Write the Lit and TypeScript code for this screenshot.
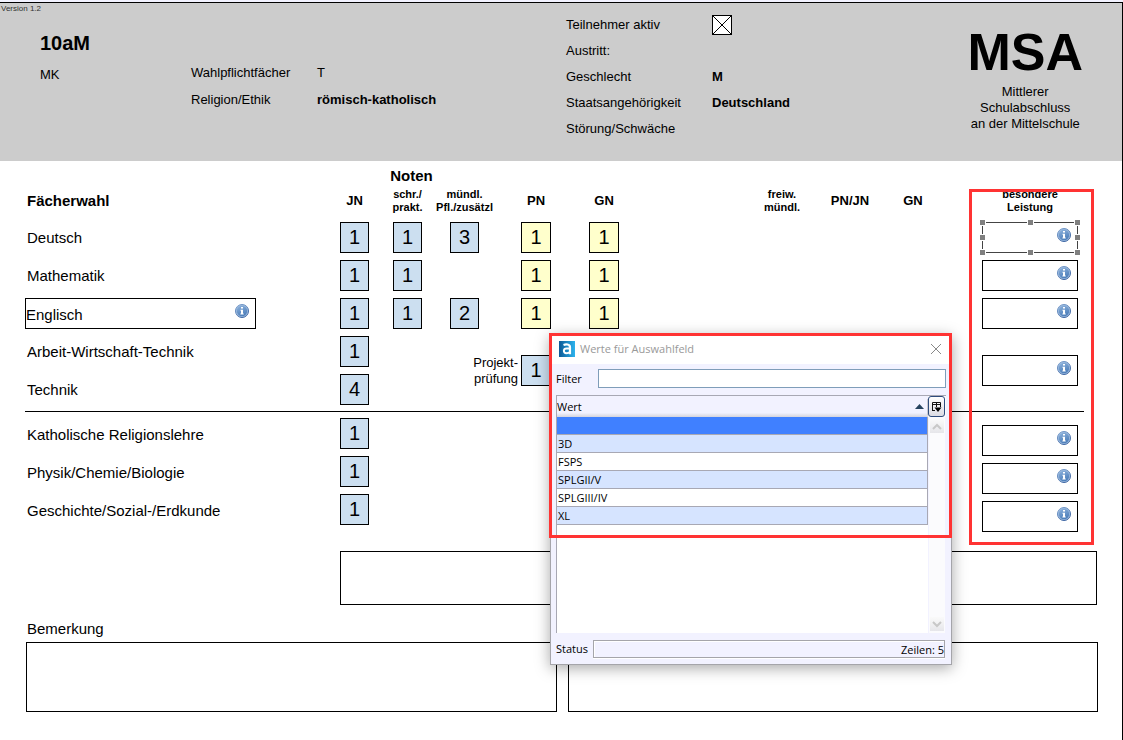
import { LitElement, html, css, nothing } from "lit";
import { customElement, state } from "lit/decorators.js";
import { classMap } from "lit/directives/class-map.js";

interface Subject {
  name: string;
  pick?: boolean;
  grades: string[];
  project?: string;
  extra: "single" | "double" | "none";
}

const MAIN: Subject[] = [
  { name: "Deutsch", grades: ["1", "1", "3", "1", "1"], extra: "single" },
  { name: "Mathematik", grades: ["1", "1", "", "1", "1"], extra: "single" },
  { name: "Englisch", pick: true, grades: ["1", "1", "2", "1", "1"], extra: "single" },
  { name: "Arbeit-Wirtschaft-Technik", grades: ["1"], project: "1", extra: "double" },
  { name: "Technik", grades: ["4"], extra: "none" },
];

const OTHER = ["Katholische Religionslehre", "Physik/Chemie/Biologie", "Geschichte/Sozial-/Erdkunde"];
const COLUMNS = ["JN", "schriftlich/praktisch", "mündlich", "PN", "GN"];

@customElement("info-button")
class InfoButton extends LitElement {
  static styles = css`
    :host { display: block; width: 14px; height: 14px; flex: none; }
    button { display: block; width: 14px; height: 14px; padding: 0; border: 0; background: none; }
    svg { display: block; }
  `;
  render() {
    return html`<button type="button" aria-label="Werte anzeigen">
      <svg width="14" height="14" viewBox="0 0 14 14">
        <defs>
          <linearGradient id="g" x1="0" y1="0" x2="0.4" y2="1">
            <stop offset="0" stop-color="#8db2dc" />
            <stop offset="1" stop-color="#4f80bb" />
          </linearGradient>
          <linearGradient id="rim" x1="0" y1="0" x2="0.6" y2="1">
            <stop offset="0" stop-color="#7fa3d0" />
            <stop offset="1" stop-color="#3a62a0" />
          </linearGradient>
        </defs>
        <circle cx="7" cy="7" r="6.5" fill="#9dbce0" stroke="url(#rim)" />
        <circle cx="7" cy="7" r="5.2" fill="url(#g)" />
        <path d="M6 3h2v1.6H6zM5.5 5.8H8v3.6h.7v1H5.4v-1H6V6.8h-.5z" fill="#fff" />
      </svg>
    </button>`;
  }
}

/** Dialog with the values that can be chosen for a field. */
@customElement("value-dialog")
class ValueDialog extends LitElement {
  @state() private values = ["", "3D", "FSPS", "SPLGII/V", "SPLGIII/IV", "XL"];
  @state() private selected = 0;

  static styles = css`
    :host {
      display: block;
      box-sizing: border-box;
      border: 1px solid #a5a5aa;
      background: #f2f2ff;
      box-shadow: 0 3px 14px rgba(0, 0, 0, 0.35);
      font: 11px/16px "Open Sans", "Noto Sans", sans-serif;
      color: #000;
    }
    *, *::before { box-sizing: border-box; }
    .title {
      display: flex;
      align-items: center;
      gap: 5px;
      height: 29px;
      padding: 0 9px 2px 8px;
      background: #fff;
    }
    h2 { flex: 1; margin: 0; font-size: 11px; font-weight: 400; color: #999; }
    button { padding: 0; border: 0; background: none; }
    svg { display: block; }
    .content { padding: 5px 5px 6px; }
    .filter { display: flex; align-items: center; gap: 16px; margin-bottom: 7px; }
    .filter input {
      flex: 1;
      min-width: 0;
      height: 19px;
      border: 1px solid #7f9db9;
      padding: 0 2px;
      background: #fff;
      font: inherit;
    }
    .list {
      display: flex;
      height: 238px;
      border-top: 1px solid #a8a8b4;
      border-left: 1px solid #a8a8b4;
      background: #fff;
    }
    .values { flex: 1; }
    table { width: 100%; border-collapse: separate; border-spacing: 0; }
    th {
      height: 21px;
      padding: 0;
      font-weight: 400;
      text-align: left;
      background: linear-gradient(#f2f2ff 80%, #d4d4dc);
    }
    .head { display: flex; align-items: center; justify-content: space-between; height: 16px; padding-right: 3px; border-right: 1px solid #c8c8d0; }
    td {
      height: 18px;
      padding: 0 1px;
      line-height: 16px;
      border-right: 1px solid #a8a8b4;
      border-bottom: 1px solid #a8a8b4;
    }
    tbody tr:nth-child(even) { background: #d6e4ff; }
    tbody tr.selected { background: #4080ff; }
    .scroll { display: flex; flex-direction: column; width: 18px; background: #fbfbfd; }
    .columns {
      display: grid;
      place-items: center;
      width: 17px;
      height: 21px;
      border: 1px solid #2f4c7d;
      border-radius: 3px;
      background: linear-gradient(#fff, #dcdce4);
    }
    .track { flex: 1; display: flex; flex-direction: column; justify-content: space-between; padding: 2px 1px; border-right: 1px solid #f2f2ff; border-left: 1px solid #f2f2ff; }
    .arrow { display: grid; place-items: center; height: 14px; background: linear-gradient(#fafafa, #e6e6ea); }
    .foot { display: flex; align-items: center; gap: 5px; margin-top: 7px; padding-right: 1px; }
    output {
      flex: 1;
      height: 18px;
      border: 1px solid #a5a5aa;
      box-shadow: 0 1px 0 #fff, inset 1px 1px 0 #fff;
      text-align: right;
      line-height: 18px;
    }
    .mark {
      position: absolute;
      inset: -2px -1px auto -2px;
      height: 205px;
      border: 3px solid #ff3333;
      pointer-events: none;
    }
  `;

  render() {
    return html`
      <div class="title">
        <svg width="16" height="16" viewBox="0 0 16 16">
          <defs>
            <linearGradient id="logo"><stop offset="0" stop-color="#0d5a96" /><stop offset="1" stop-color="#2db4ee" /></linearGradient>
          </defs>
          <rect width="16" height="16" fill="url(#logo)" />
          <path d="M4.5 4c2-.8 6.5-1.2 6.5 2.2v7" fill="none" stroke="#fff" stroke-width="2.2" />
          <path d="M11 7.4H7.6c-3.6 0-3.6 4.8-.2 4.8 1.6 0 2.8-.4 3.6-1.2" fill="none" stroke="#fff" stroke-width="2" />
        </svg>
        <h2>Werte für Auswahlfeld</h2>
        <button type="button" aria-label="Schließen">
          <svg width="12" height="12" viewBox="0 0 12 12"><path d="M1 1l10 10M11 1L1 11" stroke="#888" /></svg>
        </button>
      </div>
      <div class="content">
        <div class="filter"><label for="filter">Filter</label><input id="filter" type="text" /></div>
        <div class="list">
          <div class="values">
            <table>
              <thead>
                <tr><th scope="col"><div class="head">Wert
                  <svg width="9" height="5" viewBox="0 0 9 5"><path d="M0 5L4.5 0 9 5z" fill="#26435f" /></svg>
                </div></th></tr>
              </thead>
              <tbody>
                ${this.values.map((v, i) => html`<tr
                  class=${classMap({ selected: i === this.selected })}
                  @click=${() => (this.selected = i)}><td>${v}</td></tr>`)}
              </tbody>
            </table>
          </div>
          <div class="scroll">
            <button class="columns" type="button" aria-label="Spalten">
              <svg width="11" height="12" viewBox="0 0 11 12">
                <path d="M1.5 10V1.5h8V6M1.5 3.5h8M5.5 1.5V6M1 9.5h3" fill="none" stroke="#111" />
                <path d="M3.5 6.5h7L7 11z" fill="#000" />
              </svg>
            </button>
            <div class="track">
              <button class="arrow" type="button" aria-label="Nach oben">
                <svg width="10" height="7" viewBox="0 0 10 7"><path d="M1 6l4-4 4 4" fill="none" stroke="#c8c8c8" stroke-width="2" /></svg>
              </button>
              <button class="arrow" type="button" aria-label="Nach unten">
                <svg width="10" height="7" viewBox="0 0 10 7"><path d="M1 1l4 4 4-4" fill="none" stroke="#c8c8c8" stroke-width="2" /></svg>
              </button>
            </div>
          </div>
        </div>
        <div class="foot"><label for="status">Status</label><output id="status">Zeilen: 5</output></div>
      </div>
      <div class="mark"></div>
    `;
  }
}

@customElement("app-root")
class AppRoot extends LitElement {
  static styles = css`
    :host {
      display: block;
      box-sizing: border-box;
      min-height: 100vh;
      padding-top: 2px;
      background: #f2f2ff;
      font: 13px/16px "Liberation Sans", Arial, sans-serif;
      color: #000;
    }
    *, *::before, *::after { box-sizing: border-box; }
    h1, h2, p, dl, dd { margin: 0; }
    input, textarea { font: inherit; color: inherit; border: 1px solid #000; border-radius: 0; margin: 0; padding: 0; background: #fff; }
    .page {
      position: relative;
      min-height: calc(100vh - 2px);
      border-top: 1px solid #000;
      border-right: 1px solid #000;
      background: #fff;
    }
    header {
      display: grid;
      grid-template-columns: 190px 375px 1fr auto;
      height: 158px;
      padding: 0 39px 0 1px;
      background: #ccc;
    }
    .version { font-size: 8px; line-height: 12px; color: #333; }
    .group { padding-left: 39px; }
    h1 { margin-top: 16px; font-size: 20px; line-height: 24px; }
    .code { margin-top: 12px; }
    dl { display: grid; align-content: start; align-items: center; }
    .choice { grid-template-columns: 126px 1fr; grid-auto-rows: 27px; padding-top: 56px; }
    .person { grid-template-columns: 146px 1fr; grid-auto-rows: 26px; padding-top: 9px; }
    dd { font-weight: 700; }
    dd.plain { font-weight: 400; }
    .tick { display: grid; width: 20px; height: 20px; }
    .tick > * { grid-area: 1 / 1; }
    .tick input { appearance: none; width: 20px; height: 20px; }
    .tick svg { display: none; pointer-events: none; }
    .tick input:checked + svg { display: block; }
    .brand { padding-top: 21px; text-align: center; }
    .brand h2 { font-size: 52px; line-height: 56px; margin-bottom: 4px; }
    main { padding: 5px 24px 28px 25px; }
    .scores { width: calc(100% - 14px); table-layout: fixed; border-spacing: 0; }
    .scores th, .scores td { padding: 0 0 7px; vertical-align: middle; text-align: center; }
    .scores thead th { line-height: 13px; }
    .scores .top th { height: 19px; padding: 0; font-size: 15px; line-height: 19px; }
    .scores .heads th { height: 37px; padding-bottom: 6px; }
    .scores th.small { font-size: 11px; white-space: nowrap; }
    .scores th.name { padding-left: 2px; font-size: 15px; line-height: 18px; font-weight: 400; text-align: left; }
    .scores thead th.name { font-weight: 700; }
    .scores th.picked { padding-left: 0; }
    .scores tbody th, .scores tbody td { height: 38px; }
    .scores .last th, .scores .last td, .scores td.double { padding-bottom: 6px; border-bottom: 1px solid #000; }
    .others tr:first-child > * { padding-top: 6px; }
    .scores .others th { padding-bottom: 4px; }
    .scores .others td.award { padding-bottom: 0; vertical-align: bottom; }
    .c-name { width: 303px; }
    .c-mark { width: 53px; }
    .c-oral { width: 61px; }
    .c-pn { width: 82px; }
    .c-gn { width: 54px; }
    .c-free { width: 68px; }
    .c-end { width: 58px; }
    .c-gap { width: 34px; }
    .c-award { width: 108px; }
    .mark { display: block; width: 29px; height: 31px; margin: 0 auto; background: #ccdff0; font-size: 20px; text-align: center; }
    .mark.total { width: 30px; background: #ffffcc; }
    .mark.wide { width: 30px; margin: 0; }
    .project { display: flex; align-items: center; justify-content: flex-end; gap: 3px; padding-right: 26px; }
    .project label { text-align: right; }
    .pick { position: relative; display: flex; width: 96px; height: 31px; margin: 0 auto; padding: 5px 6px 0 0; border: 1px solid #000; background: #fff; text-align: left; }
    .pick input { flex: 1; min-width: 0; height: 20px; border: 0; }
    .pick.subject { width: 231px; margin: 0; }
    .pick.active { border-color: #444; }
    .handle { position: absolute; width: 5px; height: 5px; background: #808080; outline: 1px solid #fff; }
    .t { top: -3px; } .m { top: 12px; } .b { bottom: -3px; }
    .l { left: -3px; } .c { left: 45px; } .r { right: -3px; }
    textarea { display: block; width: 100%; height: 70px; resize: none; }
    .note { width: auto; margin: 19px 1px 15px 315px; }
    .note textarea { height: 54px; }
    .remark { display: block; padding-left: 2px; margin-bottom: 4px; font-size: 15px; line-height: 18px; }
    .remarks { display: grid; grid-template-columns: 1fr 1fr; gap: 11px; padding-left: 1px; }
    .highlight { position: absolute; top: 186px; right: 28px; width: 125px; height: 356px; border: 3px solid #ff3333; pointer-events: none; }
    value-dialog { position: absolute; top: 331px; left: 550px; width: 402px; }
  `;

  private mark(value: string, label: string, total = false) {
    return value
      ? html`<input class=${classMap({ mark: true, total })} aria-label=${label} .value=${value} />`
      : nothing;
  }

  private award(name: string, active = false) {
    return html`<div class=${classMap({ pick: true, active })}>
      <input aria-label=${`Besondere Leistung ${name}`} /><info-button></info-button>
      ${active
        ? ["t l", "t c", "t r", "m l", "m r", "b l", "b c", "b r"].map((p) => html`<span class="handle ${p}"></span>`)
        : nothing}
    </div>`;
  }

  private row(s: Subject, i: number) {
    const cells = s.project
      ? html`<td>${this.mark(s.grades[0], `${s.name} JN`)}</td>
          <td class="double" colspan="3" rowspan="2">
            <div class="project">
              <label for="project">Projekt-<br />prüfung</label>
              <input id="project" class="mark wide" .value=${s.project} />
            </div>
          </td>
          <td class="double" colspan="6" rowspan="2"></td>`
      : s.extra === "none"
        ? html`<td>${this.mark(s.grades[0], `${s.name} JN`)}</td>`
        : html`${s.grades.map((g, k) => html`<td>${this.mark(g, `${s.name} ${COLUMNS[k]}`, k > 2)}</td>`)}
            <td colspan="5"></td>`;
    return html`<tr class=${s.extra === "none" ? "last" : ""}>
      <th scope="row" class=${classMap({ name: true, picked: !!s.pick })}>
        ${s.pick
          ? html`<div class="pick subject"><input aria-label="Fach" .value=${s.name} /><info-button></info-button></div>`
          : s.name}
      </th>
      ${cells}
      ${s.extra === "none"
        ? nothing
        : html`<td class=${s.extra} rowspan=${s.extra === "double" ? 2 : 1}>${this.award(s.name, i === 0)}</td>`}
    </tr>`;
  }

  render() {
    return html`
      <div class="page">
        <header>
          <div>
            <p class="version">Version 1.2</p>
            <div class="group">
              <h1>10aM</h1>
              <p class="code">MK</p>
            </div>
          </div>
          <dl class="choice">
            <dt>Wahlpflichtfächer</dt><dd class="plain">T</dd>
            <dt>Religion/Ethik</dt><dd>römisch-katholisch</dd>
          </dl>
          <dl class="person">
            <dt><label for="active">Teilnehmer aktiv</label></dt>
            <dd class="tick">
              <input id="active" type="checkbox" checked />
              <svg width="20" height="20" viewBox="0 0 20 20"><path d="M1 1l18 18M19 1L1 19" stroke="#000" /></svg>
            </dd>
            <dt>Austritt:</dt><dd></dd>
            <dt>Geschlecht</dt><dd>M</dd>
            <dt>Staatsangehörigkeit</dt><dd>Deutschland</dd>
            <dt>Störung/Schwäche</dt><dd></dd>
          </dl>
          <div class="brand">
            <h2>MSA</h2>
            <p>Mittlerer<br />Schulabschluss<br />an der Mittelschule</p>
          </div>
        </header>
        <main>
          <table class="scores">
            <colgroup>
              <col class="c-name" /><col class="c-mark" /><col class="c-mark" /><col class="c-oral" /><col class="c-pn" />
              <col class="c-gn" /><col /><col class="c-free" /><col class="c-free" /><col class="c-end" />
              <col class="c-gap" /><col class="c-award" />
            </colgroup>
            <thead>
              <tr class="top"><td></td><th colspan="3">Noten</th><td colspan="8"></td></tr>
              <tr class="heads">
                <th class="name" scope="col">Fächerwahl</th>
                <th scope="col">JN</th>
                <th class="small" scope="col">schr./<br />prakt.</th>
                <th class="small" scope="col">mündl.<br />Pfl./zusätzl</th>
                <th scope="col">PN</th>
                <th scope="col">GN</th>
                <td></td>
                <th class="small" scope="col">freiw.<br />mündl.</th>
                <th scope="col">PN/JN</th>
                <th scope="col">GN</th>
                <td></td>
                <th class="small" scope="col">besondere<br />Leistung</th>
              </tr>
            </thead>
            <tbody>${MAIN.map((s, i) => this.row(s, i))}</tbody>
            <tbody class="others">
              ${OTHER.map((name) => html`<tr>
                <th class="name" scope="row">${name}</th>
                <td>${this.mark("1", `${name} JN`)}</td>
                <td colspan="9"></td>
                <td class="award">${this.award(name)}</td>
              </tr>`)}
            </tbody>
          </table>
          <div class="note"><textarea aria-label="Notiz"></textarea></div>
          <label class="remark" for="remark">Bemerkung</label>
          <div class="remarks">
            <textarea id="remark"></textarea>
            <textarea aria-label="Bemerkung, Fortsetzung"></textarea>
          </div>
        </main>
        <div class="highlight"></div>
        <value-dialog></value-dialog>
      </div>
    `;
  }
}
